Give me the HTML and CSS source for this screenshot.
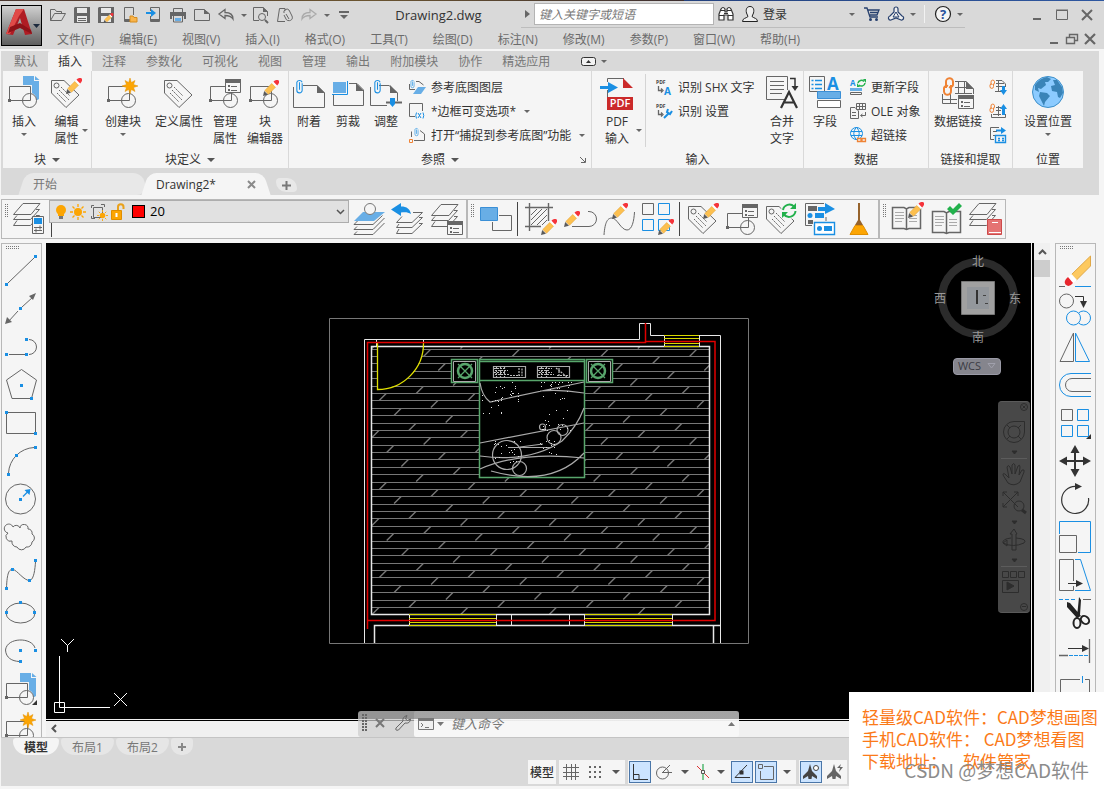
FILE: index.html
```html
<!DOCTYPE html>
<html lang="zh-CN">
<head>
<meta charset="utf-8">
<title>Drawing2.dwg</title>
<link rel="stylesheet" href="styles.css">
</head>
<body>
<svg class="defs" aria-hidden="true">
  <symbol id="pencil" viewBox="0 0 16 16"><path fill="#5a5a5a" d="M0 16L1.2 11L5 14.8z"/><path fill="#fdc04f" stroke="#e0a23a" stroke-width=".6" d="M1.8 10.5L9 3.3L12.7 7L5.5 14.2z"/><path fill="#fff" d="M9 3.3L10.5 1.8L14.2 5.5L12.7 7z"/><path fill="#f5333a" d="M10.5 1.8C12.5-.6 15-.3 15.7.6C16.6 2 16 3.8 14.2 5.5z"/></symbol>
  <symbol id="block" viewBox="0 0 32 32"><path class="g" d="M1.5 10.5H22.5V24.5H1.5z"/><circle class="g" cx="21.5" cy="24.5" r="7"/><path class="gf" d="M0 23h3v3h-3z"/></symbol>
  <symbol id="page" viewBox="0 0 32 32"><path fill="#68aee6" d="M15 0H26V5H31V23L28.500 24.500A8 8 0 0 0 24 17V9H15z"/><path fill="#68aee6" d="M27 0L31.500 4H27z"/></symbol>
  <symbol id="tag" viewBox="0 0 32 32"><path class="g" d="M1.500 4.500H14L29 19L16 31.500L1.500 17z"/><circle class="g" cx="6.500" cy="9.500" r="2.500"/><path class="g" stroke-dasharray="2 1" d="M11 11L20 20M9 14L19 24M7 17L16 26"/></symbol>
  <symbol id="burst" viewBox="0 0 16 16"><path fill="#fca503" stroke="#e08e00" stroke-width=".5" d="M8 0L9.300 4.500L13 2.500L11.500 6.500L16 8L11.500 9.500L13 13.500L9.300 11.500L8 16L6.700 11.500L3 13.500L4.500 9.500L0 8L4.500 6.500L3 2.500L6.700 4.500z"/></symbol>
  <symbol id="form" viewBox="0 0 16 14"><path fill="#f5f5f5" stroke="#666" d="M.5.5h15v13h-15z"/><path class="gf" d="M0 0h16v4H0zM3 6h2v2H3zM3 10h2v2H3z"/><path class="g" d="M6 7.500h6M6 11.500h6"/></symbol>
  <symbol id="layers" viewBox="0 0 32 32"><path class="g" d="M1.500 13.500L11 2.500H28L19 13.500zM5 14.500L1.500 18.500H18.500L27.500 8.500H24M5 19.500L1.500 24.500H18.500L27.500 14.500H24"/></symbol>
  <symbol id="book" viewBox="0 0 32 32"><path class="g" stroke-width="1.500" d="M1.500 6.500H13L15.500 8L18 6.500H29.500V27.500H18L15.500 28.500L13 27.500H1.500zM15.500 8V28"/><path stroke="#aaa" d="M4 11.500h9M4 14.500h9M4 17.500h9M4 20.500h7M18 14.500h8M18 17.500h8M18 20.500h8"/></symbol>
  <symbol id="clip" viewBox="0 0 8 16"><path class="b" d="M6.500 5V11.500A2.500 2.500 0 0 1 1.500 11.500V4A2.700 2.700 0 0 1 6.500 4M4 4V11"/></symbol>
  <symbol id="array" viewBox="0 0 32 32"><path class="g" d="M1.500 1.500h11v11h-11z"/><path class="b" d="M17.500 1.500h11v11h-11zM1.500 17.500h11v11h-11zM17.500 17.500h11v11h-11z"/></symbol>
  <symbol id="sun" viewBox="0 0 16 16"><circle cx="8" cy="8" r="4" fill="#fca503"/><path stroke="#fca503" stroke-width="1.300" d="M8 0v3M8 13v3M0 8h3M13 8h3M2.500 2.500l2 2M11.500 11.500l2 2M13.500 2.500l-2 2M4.500 11.500l-2 2"/></symbol>
  <symbol id="chain" viewBox="0 0 14 20"><g fill="none" stroke="#ef8335" stroke-width="2"><path d="M4 11V5A3.500 3.500 0 0 1 11 4.500V8A3 3 0 0 1 7 10"/><path d="M9 8V14A3.500 3.500 0 0 1 2 14.500V11A3 3 0 0 1 6 9"/></g></symbol>
</svg>

<div class="strip"></div>
<header class="head">
  <button class="app" aria-label="应用程序菜单"><svg width="39" height="39" viewBox="0 0 39 39"><path fill="#b01c24" d="M4 28L14 3H22L30 28L23 29L18 12L11 29z"/><path fill="#e04a48" d="M14 3H22L17 10L8 28H4z"/><path fill="#8e1218" d="M8 21L18 17L29 24L30 28L18 22L6 27z"/><path fill="#1d2a3d" d="M31 18h7l-3.500 4z"/></svg></button>
  <div class="titlebar">
    <div class="qat">
      <button aria-label="打开"><svg width="18" height="16"><path class="g" d="M1.500 13.500V2.500H6L7.500 4.500H12.500V6.500M1.500 13.500L5.500 6.500H16.500L12.500 13.500z"/></svg></button>
      <button aria-label="保存"><svg width="16" height="16"><path class="gf" d="M0 1L1 0H16V16H0z"/><path fill="#e8e8e8" d="M3 1h10v5H3zM3 9h10v6H3z"/><path class="g" d="M4 11.500h8M4 13.500h8"/></svg></button>
      <button aria-label="另存为"><svg width="16" height="16"><path class="gf" d="M0 1L1 0H16V16H0z"/><path fill="#e8e8e8" d="M3 1h10v5H3zM3 9h10v6H3z"/><use href="#pencil" x="5" y="6" width="11" height="10"/></svg></button>
      <button aria-label="从移动设备打开"><svg width="16" height="16"><path class="g" d="M9 14.500H2.500V.5H11.500V8"/><path class="gf" d="M3 12h5v2H3z"/><path fill="#f8b44c" stroke="#d68c1c" d="M8 15V9h3l1 1.500h3V15z"/></svg></button>
      <button aria-label="保存到移动设备"><svg width="16" height="16"><path class="g" d="M4.500 4V.5H13.500V14.500H4.500V9"/><path class="gf" d="M5 12h8v2H5z"/><path class="bf" d="M0 5h5V2l5 4-5 4V7H0z"/></svg></button>
      <button aria-label="打印"><svg width="16" height="16"><path class="gf" d="M0 5h16v7h-2V9H2v3H0z"/><path class="g" d="M3.500 5V1.500h9V5M3.500 9v6h9V9"/><path fill="#68aee6" d="M5 11h6v3H5z"/></svg></button>
      <button aria-label="图纸"><svg width="16" height="16"><path class="g" d="M.5 13.500V2.500H10L15.500 7V13.500z"/><path class="gf" d="M10 2L16 7H10z"/></svg></button>
      <button aria-label="放弃"><svg width="16" height="16"><path class="g" stroke-width="1.300" d="M1 7L7 2.500V5.500C12 5.500 15 7 15 12C13 9 11 8.500 7 8.500V11.500z"/></svg></button>
      <button class="narrow" aria-label="放弃列表"><i class="dd"></i></button>
      <button aria-label="打印预览"><svg width="16" height="16"><path class="g" d="M6 13.500H.5V.5H10L14.500 4.500V9"/><path class="gf" d="M10 0l5 5h-5z"/><circle class="g" cx="9" cy="10" r="3.500"/><path class="g" stroke-width="2" d="M12 13l3 3"/></svg></button>
      <button aria-label="附加"><svg width="16" height="16"><path class="g" d="M.5 14.500L2.500 1.500H8V4M.5 14.500H8"/><path class="g" d="M7 6A3 3 0 0 1 12 3L15 9C17 14 10 15 9 12L7 8M9 7l3 5"/></svg></button>
      <button aria-label="重做"><svg width="16" height="16"><path fill="none" stroke="#aaa" stroke-width="1.300" d="M15 7L9 2.500V5.500C4 5.500 1 7 1 12C3 9 5 8.500 9 8.500V11.500z"/></svg></button>
      <button class="narrow" aria-label="重做列表"><i class="dd"></i></button>
      <button aria-label="自定义快速访问工具栏"><svg width="10" height="8"><path class="gf" d="M0 0h10v2H0zM1 4h8L5 8z"/></svg></button>
    </div>
    <h1 class="doc">Drawing2.dwg</h1>
    <div class="info">
      <button class="play" aria-label="展开"><svg width="5" height="8"><path class="gf" d="M0 0l5 4-5 4z"/></svg></button>
      <input class="search" type="text" placeholder="键入关键字或短语" aria-label="搜索">
      <button class="sq" aria-label="查找"><svg width="16" height="16"><path fill="#fff" stroke="#333" stroke-width="1.200" d="M1 14V8L3 3Q5 0 7 3V6H9V3Q11 0 13 3L15 8V14H10V9H6V14z"/><path stroke="#333" d="M1 9.500h5M10 9.500h5M3 4.500h4M9 4.500h4M6 7.500h4"/></svg></button>
      <button class="login"><svg width="16" height="16"><path fill="#eee" stroke="#222" d="M8 .5C11 .5 12.500 3 11.500 7L10 10.500C12 12.500 15.500 12 15.500 15.500H.5C.5 12 4 12.500 6 10.500L4.500 7C3.500 3 5 .5 8 .5z"/></svg><span>登录</span><i class="dd"></i></button>
      <button class="sq" aria-label="应用商店"><svg width="16" height="16"><path fill="none" stroke="#27406e" stroke-width="1.300" d="M0 2H3L6 11H14M4 4H15L13 9H5M6 6.500h8"/><circle cx="6.500" cy="13.500" r="1.500" fill="#27406e"/><circle cx="12.500" cy="13.500" r="1.500" fill="#27406e"/></svg></button>
      <button class="sq" aria-label="Autodesk"><svg width="16" height="16"><path fill="#eee" stroke="#27406e" stroke-width="1.200" d="M6 3A2 2 0 0 1 10 3V6L14 10A2 2 0 0 1 13 14L8 12L3 14A2 2 0 0 1 2 10L6 6z"/><path fill="none" stroke="#27406e" d="M8 6L11 11H5z"/></svg></button>
      <button class="narrow" aria-label="更多"><i class="dd"></i></button>
      <span class="vline"></span>
      <button class="sq" aria-label="帮助"><svg width="18" height="18"><circle cx="9" cy="9" r="7.500" fill="#f4f4f4" stroke="#222" stroke-width="1.200"/><text x="9" y="13.500" class="qmark">?</text></svg></button>
      <button class="narrow" aria-label="帮助列表"><i class="dd"></i></button>
    </div>
    <div class="win">
      <button aria-label="最小化"><svg width="12" height="12"><path class="gf" d="M2 9h8v2H2z"/></svg></button>
      <button aria-label="最大化"><svg width="12" height="12"><path class="g" d="M.5 1.500h11v9H.5zM0 1h12"/></svg></button>
      <button aria-label="关闭"><svg width="12" height="12"><path class="g" stroke-width="2" d="M1 1l10 10M11 1L1 11"/></svg></button>
    </div>
  </div>
  <div class="menurow">
    <nav class="menu">
      <a href="#">文件(F)</a><a href="#">编辑(E)</a><a href="#">视图(V)</a><a href="#">插入(I)</a><a href="#">格式(O)</a><a href="#">工具(T)</a><a href="#">绘图(D)</a><a href="#">标注(N)</a><a href="#">修改(M)</a><a href="#">参数(P)</a><a href="#">窗口(W)</a><a href="#">帮助(H)</a>
    </nav>
    <div class="win mdi">
      <button aria-label="最小化图形"><svg width="12" height="12"><path class="gf" d="M2 9h8v2H2z"/></svg></button>
      <button aria-label="还原图形"><svg width="12" height="12"><path class="g" stroke-width="1.400" d="M3.500 4V1.500h8v6H9M.5 4.500H8.500V10.500H.5z"/></svg></button>
      <button aria-label="关闭图形"><svg width="12" height="12"><path class="g" stroke-width="2.200" d="M1 1l10 10M11 1L1 11"/></svg></button>
    </div>
  </div>
</header>

<section class="ribbon">
  <nav class="tabs">
    <a href="#">默认</a><a href="#" class="on">插入</a><a href="#">注释</a><a href="#">参数化</a><a href="#">可视化</a><a href="#">视图</a><a href="#">管理</a><a href="#">输出</a><a href="#">附加模块</a><a href="#">协作</a><a href="#">精选应用</a>
    <button class="fold" aria-label="最小化功能区"><svg width="15" height="9"><rect x=".5" y=".5" width="14" height="8" rx="2" fill="#f2f2f2" stroke="#333"/><path fill="#333" d="M5 6h5L7.500 3z"/></svg><i class="dd"></i></button>
  </nav>
  <div class="panels">
    <div class="panel p1">
      <div class="tools">
        <button class="big w42"><svg width="32" height="32"><use href="#page"/><use href="#block"/></svg><span>插入</span><i class="dd"></i></button>
        <button class="big w43"><svg width="34" height="32"><use href="#tag" width="32" height="32"/><use href="#pencil" x="16" y="2" width="16" height="16"/></svg><span>编辑<br>属性</span><i class="dd beside"></i></button>
      </div>
      <div class="cap">块<i class="tri"></i></div>
    </div>
    <div class="panel p2">
      <div class="tools">
        <button class="big w62"><svg width="32" height="32"><use href="#block"/><use href="#burst" x="15" y="2" width="16" height="16"/></svg><span>创建块</span><i class="dd"></i></button>
        <button class="big w50"><svg width="32" height="32"><use href="#tag"/></svg><span>定义属性</span></button>
        <button class="big w42"><svg width="32" height="32"><use href="#block"/><use href="#form" x="16" y="3" width="16" height="14"/></svg><span>管理<br>属性</span></button>
        <button class="big w38"><svg width="32" height="32"><use href="#block"/><use href="#pencil" x="14" y="4" width="16" height="16"/></svg><span>块<br>编辑器</span></button>
      </div>
      <div class="cap">块定义<i class="tri"></i></div>
    </div>
    <div class="panel p3">
      <div class="tools">
        <button class="big w40"><svg width="32" height="32"><path class="g" d="M.5 11V31.500H31.500V17L24 9.500H10"/><path class="gf" d="M24 9L32 17H24z"/><use href="#clip" x="2" y="2" width="9" height="17"/></svg><span>附着</span></button>
        <button class="big w38"><svg width="32" height="32"><path class="g" d="M1.500 18V29.500H31.500V14L25 7.500H17"/><path class="gf" d="M24 7L32 15H24z"/><path fill="#68aee6" d="M1 6h13v11H1z"/><path class="b" d="M15.500 5V18.500H0"/></svg><span>剪裁</span></button>
        <button class="big w38"><svg width="34" height="32"><path class="g" d="M1.500 11V29.500H18M10 9.500H20L28.500 17V25"/><path class="gf" d="M21 9L29 17H21z"/><path class="g" stroke-width="2" d="M17 26.500H33"/><path class="bf" d="M21 22h5v6l-2.500 3L21 28z"/><use href="#clip" x="4" y="2" width="9" height="17"/></svg><span>调整</span></button>
        <div class="smalls">
          <button><svg width="17" height="16"><path class="g" d="M.5 5V10.500H6M7 2.500H10L14.500 6"/><path fill="#68aee6" d="M9 8H17L12 15H4z"/><use href="#clip" x="1" y="0" width="5" height="10"/></svg>参考底图图层</button>
          <button><svg width="17" height="16"><path class="g" d="M6 13.500H.5V.5H13.500V8"/><path class="b" d="M9 10l3 5M12 10l-3 5M7.500 9.500q-1.500 3 0 6M14 9.500q1.500 3 0 6"/></svg>*边框可变选项*<i class="dd"></i></button>
          <button><svg width="17" height="16"><path class="g" d="M2.500 10V4.500M5 13.500H15.500V7L11 3.500"/><path fill="none" stroke="#ef8335" d="M.5 12.500h3v3h-3z"/><use href="#clip" x="5" y="0" width="5" height="10"/></svg>打开“捕捉到参考底图”功能<i class="dd"></i></button>
        </div>
      </div>
      <div class="cap">参照<i class="tri"></i></div>
      <button class="launch" aria-label="参照设置"><svg width="6" height="6"><path class="g" d="M0 0l5 5M5.500 1V5.500H1"/></svg></button>
    </div>
    <div class="panel p4">
      <div class="tools">
        <button class="big w50"><svg width="34" height="34"><path class="g" d="M7.500 6V2.500H24M7.500 14V22"/><path fill="#cb2a2a" d="M23 2L33 12H23zM7 21H33V34H7z"/><text class="pdf" x="20" y="31">PDF</text><path class="bf" d="M0 10H8V6L18 11.500L8 17V13H0z"/></svg><span>PDF<br>输入</span><i class="dd beside"></i></button>
        <span class="psep"></span>
        <div class="smalls wide2">
          <button><svg width="17" height="16"><text class="tiny" x="0" y="5">PDF</text><path class="g" stroke-width="1.300" d="M2.500 7V11.500H6M5 9.500l2 2-2 2"/><text class="bluea" x="8" y="16">A</text></svg>识别 SHX 文字</button>
          <button><svg width="17" height="16"><text class="tiny" x="0" y="5">PDF</text><path class="g" stroke-width="1.300" d="M2.500 7V11.500H6M5 9.500l2 2-2 2"/><path class="b" stroke-width="2" d="M8 15l5-5M16 8l-2 3-3-2 1-3"/></svg>识别 设置</button>
        </div>
        <button class="big w40"><svg width="32" height="32"><path class="g" d="M20 23.500H.5V.5H21.500V14M4 5.500h14M4 9.500h14M4 13.500h14M4 17.500h12"/><path fill="none" stroke="#333" stroke-width="1.500" d="M24 2.500h5V12"/><path fill="#333" d="M25.500 10h7L29 15z"/><path fill="none" stroke="#333" stroke-width="2.200" d="M15 32L23 16L31 32M18 26.500H28"/></svg><span>合并<br>文字</span></button>
      </div>
      <div class="cap">输入</div>
    </div>
    <div class="panel p5">
      <div class="tools">
        <button class="big w42"><svg width="32" height="32"><path class="g" d="M.5.5h15v15H.5z"/><path class="b" stroke-width="1.500" d="M6 4.500h7M6 8.500h7M6 12.500h7M2.500 4.500h2M2.500 8.500h2M2.500 12.500h2"/><text class="biga" x="18" y="14">A</text><path fill="#68aee6" stroke="#3a8fd6" d="M8.500 15.500h23v7h-23z"/><path fill="#fff" stroke="#666" d="M8.500 24.500h23v7h-23z"/></svg><span>字段</span></button>
        <div class="smalls">
          <button><svg width="16" height="16"><text class="bluea sm" x="0" y="7">A</text><path fill="none" stroke="#22b14c" stroke-width="1.500" d="M8 4A3.500 3.500 0 0 1 14 2.500M15 4A3.500 3.500 0 0 1 9 6"/><path fill="#22b14c" d="M13 0h3v4zM7 8h3L7 4z"/><path fill="#68aee6" d="M0 9h12v3H0z"/><path class="g" d="M.5 13.500h11v2H.5z"/></svg>更新字段</button>
          <button><svg width="16" height="16"><path class="g" d="M6.500.5h9v6h-9zM6 3.500h9M9.500 1v6M12.500 1v6M.5 4.500H5L8.500 8V15.500H.5zM2 9.500h4M2 12.500h4M15.500 9v3.500H11M12.500 11l-2 1.500 2 1.500"/></svg>OLE 对象</button>
          <button><svg width="16" height="16"><circle class="b" cx="6.500" cy="6.500" r="6"/><path class="b" d="M6.500 0Q1 6.500 6.500 13M6.500 0Q12 6.500 6.500 13M1 4.500h11M1 8.500h11"/><path fill="#f5f5f5" stroke="#ef8335" stroke-width="1.300" d="M7.500 11.500h3.500v3H7.500zM12 11.500h3.500v3H12z"/></svg>超链接</button>
        </div>
      </div>
      <div class="cap">数据</div>
    </div>
    <div class="panel p6">
      <div class="tools">
        <button class="big w58"><svg width="34" height="34"><path class="g" d="M14 5.500H25L32.500 13V18M1.500 18V27.500H16M1 23.500H16M9.500 18V27M14 11.500h15M14 17.500h17M17.500 6v12M23.500 6v12"/><path class="gf" d="M25 5l8 8h-8z"/><use href="#chain" x="1" y="1" width="14" height="20"/><use href="#form" x="17" y="19" width="16" height="14"/></svg><span>数据链接</span></button>
        <div class="smalls only">
          <button aria-label="从源下载"><svg width="17" height="16"><path class="g" d="M6 1.500H12L15.500 5V8M5 12.500H12M6 4.500h8M6 7.500h8M8.500 2v10"/><use href="#chain" x="-1" y="0" width="7" height="11"/><path class="bf" d="M12 7h3v4h2l-3.500 5L10 11h2z"/></svg></button>
          <button aria-label="上载到源"><svg width="17" height="16"><path class="g" d="M1.500 11V14.500H15.500V11M6 4.500h5M6 7.500h5M3 11.500h8M8.500 3v10"/><use href="#chain" x="-1" y="0" width="7" height="11"/><path class="bf" d="M12 12h3V6h2L13.500 1L10 6h2z"/></svg></button>
          <button aria-label="提取数据"><svg width="17" height="16"><path class="g" d="M4 12.500H.5V.5H9M3 4.500h4M3 8.500h2"/><path class="bf" d="M6 2.500H11V0L16 3.500L11 7V4.500H6z"/><path class="b" stroke-width="1.400" d="M5.500 8.500h10v7h-10zM8 11.500h2M12 11.500h2M8 13.500h2M12 13.500h2"/></svg></button>
        </div>
      </div>
      <div class="cap">链接和提取</div>
    </div>
    <div class="panel p7">
      <div class="tools">
        <button class="big w70"><svg width="32" height="32"><circle cx="16" cy="16" r="15.500" fill="#8ccbff" stroke="#3d8fc9"/><path fill="#3a84b8" d="M3 9Q8 2 15 1L19 3L16 6L13 6L14 9L9 13L6 12L7 16L3 14zM8 16L15 17L18 20L13 26L12 30L9 24L7 20zM21 4L25 4L30 11L31 17L28 22L26 21L25 16L20 15L19 10L23 9z"/></svg><span>设置位置</span><i class="dd"></i></button>
      </div>
      <div class="cap">位置</div>
    </div>
  </div>
</section>

<nav class="files">
  <a href="#" class="file start"><span>开始</span></a>
  <a href="#" class="file cur"><span>Drawing2*</span><svg width="9" height="9"><path stroke="#8a8a8a" stroke-width="2" d="M1 1l7 7M8 1L1 8"/></svg></a>
  <button class="plus" aria-label="新图形"><svg width="9" height="9"><path stroke="#777" stroke-width="2" d="M4.500 0v9M0 4.500h9"/></svg></button>
</nav>

<div class="bars">
  <div class="bar">
    <i class="grip"></i>
    <button class="tb" aria-label="图层特性"><svg width="36" height="36"><use href="#layers" width="32" height="32"/><path fill="#f5f5f5" stroke="#666" d="M20.500 15.500h11v17h-11z"/><path class="bf" d="M22 17h8v6h-8z"/><path class="g" d="M22 26.500h8M22 29.500h8M28 24.500v4M24 27.500v4"/></svg></button>
    <div class="combo">
      <div class="pick">
        <svg width="78" height="20" viewBox="0 0 78 20"><circle cx="8" cy="8" r="5" fill="#fca503"/><path fill="#fca503" d="M5 11h6v3H5z"/><path fill="#777" d="M6 14h4v3H6z"/><use href="#sun" x="17" y="2" width="16" height="16"/><path class="g" d="M40.500 5.500H49.500V15.500H40.500zM38.500 6V3.500H41M48 2.500h3.500V5M38.500 14v2.500H42"/><use href="#sun" x="44" y="8" width="11" height="11"/><path fill="#fca503" stroke="#e08e00" d="M58.500 8.500h10v9h-10z"/><path fill="none" stroke="#e9a11b" stroke-width="2" d="M65 8V5A2.500 2.500 0 0 1 70.500 5V7"/><path fill="#fff" d="M62.500 11h2v4h-2z"/></svg>
        <i class="swatch"></i>
        <select aria-label="图层"><option>20</option></select>
        <svg class="chev" width="9" height="6"><path fill="none" stroke="#555" stroke-width="1.500" d="M1 1l3.500 3.500L8 1"/></svg>
      </div>
    </div>
    <button class="tb" aria-label="置为当前图层"><svg width="32" height="34"><path class="g" d="M4.500 19L1 22.500H20L29.500 13.500M4 24.500L1 27.500H20L31.500 16M4 29.500L1 32.500H20L31.500 21" /><path fill="#68aee6" d="M10 10H32L21 19H1z"/><circle cx="17" cy="7" r="5.500" fill="#f5f5f5" stroke="#777"/></svg></button>
    <button class="tb" aria-label="上一个图层"><svg width="34" height="34"><path class="g" d="M22 10.500H31.500L21 20.500H5.500L11 14.500M8 22L5.500 25.500H21L31.500 15.500H28M8 27L5.500 31.500H21L31.500 21.500H28"/><path class="bf" d="M0 7.500L10 1V4.500C16 4.500 19 7 20 12C17 10 14 10 10 10.500V14z"/></svg></button>
    <button class="tb" aria-label="图层状态"><svg width="34" height="34"><use href="#layers" width="32" height="32"/><use href="#form" x="17" y="19" width="16" height="14"/></svg></button>
  </div>
  <div class="bar">
    <i class="grip"></i>
    <button class="tb" aria-label="绘图次序"><svg width="32" height="32"><path class="g" d="M19 12.500H31.500V27.500H12.500V19"/><path fill="#68aee6" stroke="#3a8fd6" d="M.5 4.500h17v13H.5z"/></svg></button>
    <i class="bsep"></i>
    <button class="tb" aria-label="编辑图案填充"><svg width="32" height="32"><path class="g" stroke-width="1.400" d="M4.500 0V28M23.500 0V18M0 4.500H28M0 23.500H16"/><path class="g" d="M6 12L12 6M6 17L17 6M6 22L22 6M12 22L22 12M17 22L22 17"/><use href="#pencil" x="16" y="16" width="16" height="16"/></svg></button>
    <button class="tb" aria-label="编辑多段线"><svg width="32" height="32"><path class="g" d="M8 23.500H25A7.500 7.500 0 0 0 25 8.500H24"/><use href="#pencil" x="0" y="8" width="16" height="16"/></svg></button>
    <button class="tb" aria-label="编辑样条曲线"><svg width="32" height="32"><path class="g" d="M1 32C2 18 5 15 9 15C14 15 18 27 24 27C29 27 31 18 31.500 9"/><use href="#pencil" x="9" y="0" width="16" height="16"/></svg></button>
    <button class="tb" aria-label="编辑阵列"><svg width="32" height="32"><use href="#array" x="-1" y="-1"/><use href="#pencil" x="16" y="16" width="16" height="16"/></svg></button>
    <i class="bsep"></i>
    <button class="tb" aria-label="编辑属性"><svg width="32" height="32"><use href="#tag" y="-1"/><use href="#pencil" x="16" y="0" width="16" height="16"/></svg></button>
    <button class="tb" aria-label="块属性管理器"><svg width="32" height="32"><use href="#block"/><use href="#form" x="16" y="1" width="16" height="14"/></svg></button>
    <button class="tb" aria-label="同步属性"><svg width="32" height="32"><use href="#tag" y="-1"/><circle cx="24" cy="8" r="8" fill="#f5f5f5"/><path fill="none" stroke="#22b14c" stroke-width="2" d="M18 7A6.500 6.500 0 0 1 29 3.500M30.500 8A6.500 6.500 0 0 1 19 11.500"/><path fill="#22b14c" d="M31 0v6h-6zM17 15V9h6z"/></svg></button>
    <button class="tb" aria-label="数据提取"><svg width="32" height="32"><path class="g" d="M8 22.500H1.500V.5H20M22 14V18"/><path class="gf" d="M4 3h9v5H4zM4 17h5v4H4z"/><path class="bf" d="M14 4H21V0L31 6L21 11V8H14zM11 10h9v5H11z"/><circle class="bf" cx="6" cy="12.500" r="2.500"/><path fill="#fff" stroke="#1a8fe3" stroke-width="1.400" d="M10.500 19.500h20v12h-20z"/><circle class="bf" cx="15.500" cy="25.500" r="2.500"/><path class="bf" d="M20 23h8v5h-8z"/></svg></button>
    <button class="tb" aria-label="清理"><svg width="32" height="32"><path fill="#96632c" d="M15 0h2v17l3 5h-8l3-5z"/><path fill="#fca503" stroke="#e08e00" d="M12 22.500H20L25 31.500H7z"/></svg></button>
  </div>
  <div class="bar">
    <i class="grip"></i>
    <button class="tb" aria-label="标准"><svg width="34" height="34"><use href="#book" y="-1" width="32" height="32"/><use href="#pencil" x="17" y="0" width="16" height="16"/></svg></button>
    <button class="tb" aria-label="检查标准"><svg width="32" height="34"><use href="#book" y="3" width="32" height="32"/><path fill="#22b14c" d="M16 7L19 4L22 7L28 1L31 4L22 13z"/></svg></button>
    <button class="tb" aria-label="图层转换器"><svg width="32" height="32"><use href="#layers" x="-2" y="-2" width="32" height="32"/><path fill="#e57373" stroke="#cc4a4a" d="M17.500 16.500h14v15h-14z"/><path stroke="#fff" d="M22 19.500h6M19 29.500h12"/></svg></button>
  </div>
</div>

<main class="work">
  <div class="side left">
    <i class="hgrip"></i>
    <button aria-label="直线"><svg width="32" height="32"><path class="g" d="M3 28L29 3"/><path class="bf" d="M0 28h3v3H0zM29 0h3v3h-3z"/></svg></button>
    <button aria-label="构造线"><svg width="32" height="32"><path class="g" d="M3 29L13 18M17 14L28 4"/><path class="gf" d="M31 0L28 7L24 3zM0 31L2 24L7 29z"/><path class="bf" d="M14 14h3v3h-3z"/></svg></button>
    <button aria-label="多段线"><svg width="32" height="32"><path class="g" d="M4 23.500H20M24 23.500A7.500 7.500 0 0 0 24 8.500"/><path class="bf" d="M0 22h3v3H0zM20 22h3v3h-3zM20 7h3v3h-3z"/></svg></button>
    <button aria-label="多边形"><svg width="32" height="32"><path class="g" d="M16.500 .5L31.500 11L26.500 29.500H7L1.500 11z"/><path class="bf" d="M15 15h3v3h-3zM25 28h3v3h-3z"/></svg></button>
    <button aria-label="矩形"><svg width="32" height="32"><path class="g" d="M1.500 5.500H30.500V26.500H1.500z"/><path class="bf" d="M0 4h3v3H0zM29 25h3v3h-3z"/></svg></button>
    <button aria-label="圆弧"><svg width="32" height="32"><path class="g" d="M3.500 28A27 27 0 0 1 29 2.500"/><path class="bf" d="M2 28h3v3H2zM10 9h3v3h-3zM29 1h3v3h-3z"/></svg></button>
    <button aria-label="圆"><svg width="32" height="32"><circle class="g" cx="15.500" cy="16" r="15"/><path class="b" stroke-width="1.300" d="M18 13.500L23 8.500"/><path class="bf" d="M14 15h3v3h-3zM25.500 6L24.500 12L19.500 7z"/></svg></button>
    <button aria-label="修订云线"><svg width="32" height="32"><path class="g" d="M3 12A4.500 4.500 0 1 1 8 6A4 4 0 0 1 15 7A4 4 0 0 1 23 8A4 4 0 0 1 27 13A4.500 4.500 0 0 1 27 21A5 5 0 0 1 21 26A5 5 0 0 1 12 26A5 5 0 0 1 7 20A4.500 4.500 0 0 1 3 12"/></svg></button>
    <button aria-label="样条曲线"><svg width="32" height="32"><path class="g" d="M1.500 29C2 14 4 10 8 10.500S19 22 25 21.500C29 20 30 10 30.500 3"/><path class="bf" d="M0 28h3v3H0zM6 9h3v3H6zM23 20h3v3h-3zM29 0h3v3h-3z"/></svg></button>
    <button aria-label="椭圆"><svg width="32" height="32"><ellipse class="g" cx="15.500" cy="16" rx="14.500" ry="10"/><path class="bf" d="M14 4h3v3h-3zM0 14h3v3H0zM28 14h3v3h-3z"/></svg></button>
    <button aria-label="椭圆弧"><svg width="32" height="32"><path class="g" d="M30 13C27 2 2 2 .5 15C1 23 7 26 14 26.500"/><path class="bf" d="M14 14h3v3h-3zM29 14h3v3h-3zM14 25h3v3h-3z"/></svg></button>
    <button aria-label="插入块"><svg width="32" height="32"><use href="#page"/><use href="#block"/><path fill="#333" d="M32 27v5h-5z"/></svg></button>
    <button aria-label="创建块"><svg width="32" height="32"><use href="#block"/><use href="#burst" x="15" y="1" width="16" height="16"/></svg></button>
  </div>

  <div class="view">
    <div class="cols">
      <div class="frame">
        <div class="canvas">
          <svg class="drawing" role="img" aria-label="平面图">
            <defs><clipPath id="room"><path clip-rule="evenodd" d="M372 347H709V614H372zM451 359V383H479V478H585V383H613V359zM378 347V389A45 45 0 0 0 423 347z"/></clipPath></defs>
            <g transform="translate(-46 -243)" fill="none">
              <path stroke="#777" d="M329.500 318.500H748.500V643.500H329.500z"/>
              <g id="floor" stroke="#777" clip-path="url(#room)"></g>
              <g stroke="#e8e8e8">
                <path d="M364.500 643V339.500H639.500V323.500H650.500V335.500H720.500V643"/>
                <path stroke-width="1.500" d="M371.500 346.500H709.500V614.500H371.500zM374.500 643V625.500H720.500M713.500 626V643"/>
                <path d="M376.500 339V346M423.500 339V346M664.500 335V346M699.500 335V346M409.500 614V625M496.500 614V625M511.500 614V625M569.500 614V625M584.500 614V625M672.500 614V625"/>
              </g>
              <path stroke="#d8d800" d="M664 335.500H699M664 338.500H699M664 343.500H699M664 346.500H699M409 614.500H496M409 618.500H496M409 622.500H496M409 625.500H496M585 614.500H672M585 618.500H672M585 622.500H672M585 625.500H672"/>
              <path stroke="#e0e000" stroke-width="1.300" d="M377.500 343V389.500A46 46 0 0 0 423.500 343"/>
              <path stroke="#e00000" stroke-width="1.500" d="M367.500 629V342.500H645.500V323M645.500 341.500H715V620.500H367.500"/>
              <g stroke="#58a66c" stroke-width="1.500">
                <path d="M479.500 359.500H584.500V477.500H479.500zM479.500 380.500H584.500M479.500 361.500H584.500M451.500 359.500H477.500V382.500H451.500zM586.500 359.500H612.500V382.500H586.500z"/>
                <path stroke="#aaa" stroke-width="1" d="M453.500 361.500H475.500V381.500H453.500zM588.500 361.500H610.500V381.500H588.500z"/>
                <g stroke-width="2.500"><circle cx="465" cy="371" r="7"/><circle cx="598" cy="371" r="7"/></g>
                <path stroke-width="1.300" d="M458 364L472 378M472 364L458 378M591 364L605 378M605 364L591 378"/>
              </g>
              <g stroke="#aaa" stroke-width="1.200">
                <path d="M493.500 366.500H525.500V377.500H493.500zM537.500 366.500H569.500V377.500H537.500z"/>
                <path stroke="#bbb" stroke-dasharray="2 1" d="M494 368.500H505M495 370.500H508M494 372.500H506M495 374.500H509M510 375.500H520M496.500 367V377M500.500 367V377M504.500 367V377M519 368V376M522 368.500V376M539 368.500H552M538 370.500H550M539 372.500H552M538 374.500H554M557 375.500H569M541.500 367V377M546.500 367V377M556 368L567 377M559 368V377"/>
                <path d="M480 383Q482 396 490 402L584 382M540 391Q560 389 584 393M480 443L584 423M480 456Q530 463 562 441Q577 427 584 408M480 469Q520 451 584 458M491 471Q552 488 584 453M508 447.500H550M520 447L543 444"/>
                <circle cx="507" cy="455" r="14.500"/><circle cx="519.500" cy="468.500" r="7"/><circle cx="554" cy="437.500" r="7"/><circle cx="562.500" cy="430" r="5.500"/><circle cx="542.500" cy="427" r="3"/>
              </g>
              <g id="dots" fill="#ddd"></g>
              <path stroke="#fff" d="M59.500 656V707.500H110M54.500 702.500h10v10h-10zM61 639L67.500 645.500L74 639M67.500 645V652M114 693L127 706M127 693L114 706"/>
            </g>
          </svg>
          <svg class="compass" width="96" height="100"><circle cx="48" cy="50" r="36" fill="none" stroke="#2b2b2b" stroke-width="8"/><path fill="#a0a0a0" stroke="#777" d="M31.500 33.500h33v33h-33z"/><path fill="#93979c" d="M37 39h22v22H37z"/><path stroke="#333" stroke-width="2" d="M47 42v14"/><path stroke="#444" d="M53 47.500h3M55 55.500h3"/><text x="48" y="18">北</text><text x="48" y="94">南</text><text x="10" y="55">西</text><text x="85" y="55">东</text></svg>
          <button class="wcs">WCS<svg width="9" height="6"><path fill="none" stroke="#a0a0ac" d="M1 .5h7L4.500 5z"/></svg></button>
          <div class="nav">
            <svg width="32" height="210" fill="none" stroke="#2d2d2d"><circle cx="26" cy="5" r="3.500"/><path d="M24.500 3.500l3 3M27.500 3.500l-3 3"/><circle cx="16" cy="30" r="6"/><path d="M16 19.500H26.500V30A10.500 10.500 0 1 1 16 19.500zM12 26l-3-3M20 26l3-3M12 34l-3 3M20 34l3 3"/><path fill="#2d2d2d" d="M14 49h5l-2.500 3zM14 119h5l-2.500 3zM14 157h5l-2.500 3z"/><path stroke="#5c5c5c" d="M3 56.500H29M3 164.500H29"/><path d="M10 81L5 73Q5 70 8 73L11 76L9 65Q10 62 12 65L14 72V63Q16 60 17 63V72L20 64Q22 62 22 65L21 73L24 68Q27 67 26 70L22 80Q16 85 10 81z"/><path d="M5 90L20 105M20 90L5 105M5 94V90H9M16 90h4v4M5 101v4h4"/><circle cx="21" cy="104" r="5"/><path stroke-width="3" d="M24 108l4 3"/><path d="M14 148V132H12L16 127L19 132H18V148zM13 136Q4 137 5 141Q15 146 26 141Q30 137 18 136M5 141l4-3v6z"/><path d="M4.500 169.500h6v6h-6zM12.500 169.500h6v6h-6zM20.500 169.500h6v6h-6zM4.500 178.500h16v12h-16z"/><path fill="#2d2d2d" d="M9 180l7 4-7 4z"/><circle cx="26" cy="205" r="3.500"/><path d="M24 204.500h4"/></svg>
          </div>
        </div>
      </div>
      <div class="vscroll"><svg width="9" height="6"><path fill="none" stroke="#555" stroke-width="2" d="M1 5l3.500-3.500L8 5"/></svg><i></i></div>
    </div>
    <div class="hscroll"><svg width="6" height="9"><path fill="none" stroke="#555" stroke-width="2" d="M5 1L1.500 4.500L5 8"/></svg></div>
    <div class="cmd">
      <div class="cmdleft">
        <i class="cgrip"></i>
        <button aria-label="关闭命令行"><svg width="10" height="10"><path stroke="#777" stroke-width="2" d="M1 1l8 8M9 1L1 9"/></svg></button>
        <button aria-label="自定义"><svg width="16" height="16"><path class="g" d="M1 13L8 6Q7 2 12 .5L10.500 4L12.500 5.500L15.500 4Q15 9 10 8L3.500 15Q0 16 1 13z"/></svg></button>
      </div>
      <div class="cmdin">
        <svg width="26" height="14"><path fill="#f0f0f0" stroke="#777" d="M.5 1.500h15v11H.5z"/><path fill="#777" d="M0 1h16v3H0zM19 5h7l-3.500 4z"/><path fill="none" stroke="#777" d="M3 6l2 2-2 2M7 10.500h4"/></svg>
        <input type="text" placeholder="键入命令" aria-label="命令">
        <svg width="7" height="4"><path fill="#777" d="M0 4L3.500 0L7 4z"/></svg>
      </div>
    </div>
  </div>

  <div class="side right">
    <i class="hgrip"></i>
    <button aria-label="删除"><svg width="32" height="32"><path fill="#fdc95f" stroke="#e0a848" d="M12 20L31.500 1V11L17.500 25z"/><path fill="#fff" d="M9 22L12.500 19L18 25L14 28z"/><path fill="#e8262d" d="M9 22L14 28Q10 33 6.500 29.500Q4 26 9 22z"/><path class="g" d="M0 31.500h6"/><path class="b" d="M16 31.500h16"/></svg></button>
    <button aria-label="复制"><svg width="32" height="32"><circle class="g" cx="7.500" cy="8" r="7"/><path fill="none" stroke="#333" d="M16 3.500h8.500V9"/><path fill="#333" d="M21 8h7l-3.500 7z"/><circle class="b" cx="24.500" cy="25" r="7"/><circle cx="14.500" cy="25" r="7" fill="#f5f5f5" stroke="#1a8fe3"/></svg></button>
    <button aria-label="镜像"><svg width="32" height="32"><path class="g" d="M14.500 2V30.500H1z"/><path class="b" d="M16.500 2V30.500H30.500z"/></svg></button>
    <button aria-label="偏移"><svg width="32" height="32"><path class="b" d="M32 4.500H12A11.500 11.500 0 0 0 12 27.500H32"/><path class="g" d="M32 9.500H13A6.500 6.500 0 0 0 13 22.500H32"/></svg></button>
    <button aria-label="阵列"><svg width="32" height="32"><use href="#array" x="1" y="1"/><path fill="#333" d="M32 27v5h-5z"/></svg></button>
    <button aria-label="移动"><svg width="32" height="32"><path stroke="#333" stroke-width="2" d="M16 5V27M5 16H27"/><path fill="#333" d="M16 0l4.500 8h-9zM16 32l4.500-8h-9zM0 16l8-4.500v9zM32 16l-8-4.500v9z"/></svg></button>
    <button aria-label="旋转"><svg width="32" height="32"><path fill="none" stroke="#333" stroke-width="1.200" d="M29.500 15A13.500 13.500 0 1 1 17 3.500"/><path fill="#333" d="M16 0l7 3.500-7 3.500z"/></svg></button>
    <button aria-label="缩放"><svg width="32" height="32"><path class="b" d="M.5 13V.5H31.500V31.500H19"/><path class="g" d="M.5 14.500h17v17H.5z"/></svg></button>
    <button aria-label="拉伸"><svg width="32" height="32"><path class="g" d="M14.500 22V.5H.5V31.500H14.500V27"/><path class="b" d="M16 .5H21.500L31.500 31.500H16"/><path stroke="#333" d="M9 24.500h9"/><path fill="#333" d="M17 21l7 3.500-7 3.500z"/></svg></button>
    <button aria-label="修剪"><svg width="32" height="32"><path class="b" stroke-dasharray="4 2" d="M0 2.500H16"/><path class="g" d="M24 2.500h8"/><path fill="#222" d="M20 0L22 3L21 18L18 20zM8 5L11 6L22 19L18 21L8 10z"/><g fill="none" stroke="#222" stroke-width="2"><ellipse cx="18" cy="26" rx="3.500" ry="5"/><ellipse cx="26" cy="23" rx="3.500" ry="4.500" transform="rotate(-50 26 23)"/></g></svg></button>
    <button aria-label="延伸"><svg width="32" height="32"><path class="g" stroke-width="1.300" d="M30.500 4V28M0 20.500h9"/><path class="b" stroke-dasharray="4 1" d="M10 20.500h19"/><path stroke="#333" d="M9 13.500h15"/><path fill="#333" d="M23 10l7 3.500-7 3.500z"/></svg></button>
    <button aria-label="打断"><svg width="32" height="32"><path class="g" d="M21 6.500H1.500V32M26 6.500H30.500V32"/><path class="b" d="M23.500 3v7"/></svg></button>
  </div>
</main>

<footer class="foot">
  <nav class="layouts">
    <a href="#" class="on">模型</a><a href="#">布局1</a><a href="#">布局2</a><button aria-label="新建布局"><svg width="8" height="8"><path stroke="#888" stroke-width="2" d="M4 0v8M0 4h8"/></svg></button>
  </nav>
  <div class="status">
    <button class="model">模型</button>
    <div class="grp">
      <button aria-label="栅格"><svg width="16" height="16"><path class="g" d="M3.500 0v16M8.500 0v16M12.500 0v16M0 3.500h16M0 8.500h16M0 12.500h16"/></svg></button>
      <button aria-label="捕捉"><svg width="16" height="16"><path class="gf" d="M2 2h2v2H2zM7 2h2v2H7zM12 2h2v2h-2zM2 7h2v2H2zM7 7h2v2H7zM12 7h2v2h-2zM2 12h2v2H2zM7 12h2v2H7zM12 12h2v2h-2z"/></svg></button>
      <button class="nr" aria-label="捕捉设置"><i class="tri"></i></button>
    </div>
    <div class="grp">
      <button class="act" aria-label="正交"><svg width="16" height="16"><path fill="none" stroke="#333" d="M1.500 0V15.500H16M2 10.500h5V15"/></svg></button>
      <button aria-label="极轴"><svg width="16" height="16"><circle class="g" cx="6.500" cy="9" r="6"/><path class="g" d="M6 8.500h10M6 9L14 1"/></svg></button>
      <button class="nr" aria-label="极轴设置"><i class="tri"></i></button>
      <button class="nr" aria-label="等轴测"><svg width="14" height="16"><path stroke="#2aa850" stroke-width="1.200" d="M7 0v16"/><path stroke="#d33" d="M1 2l12 12"/><path fill="#f5f5f5" stroke="#555" d="M5.500 6.500h3v3h-3z"/></svg></button>
      <button class="nr" aria-label="等轴测设置"><i class="tri"></i></button>
      <button class="act" aria-label="对象捕捉追踪"><svg width="18" height="16"><path fill="none" stroke="#333" d="M14 1L2 13.500H17"/><path fill="#333" d="M6.500 6.500h4v4h-4z"/></svg></button>
      <button class="act" aria-label="对象捕捉"><svg width="16" height="16"><path class="g" d="M6 2.500h9.500v13h-13V7"/><path class="g" d="M.5.5h4v4h-4z"/></svg></button>
      <button class="nr" aria-label="对象捕捉设置"><i class="tri"></i></button>
    </div>
    <div class="grp">
      <button class="act" aria-label="注释可见性"><svg width="17" height="16"><path fill="#444" d="M7 0l2 7L14 12V15L9 12L8.500 15H5.500L5 12L0 15V12L5 7z"/><circle cx="13" cy="4" r="2.500" fill="#fff" stroke="#444"/></svg></button>
      <button aria-label="自动缩放"><svg width="17" height="16"><path class="gf" d="M7 0l2 7L14 12V15L9 12L8.500 15H5.500L5 12L0 15V12L5 7zM14 0l-4 4h3l-1 4 4-5h-3z"/></svg></button>
    </div>
  </div>
</footer>

<aside class="promo">
  <p>轻量级CAD软件：CAD梦想画图</p>
  <p>手机CAD软件：&nbsp;CAD梦想看图</p>
  <p>下载地址：<span class="dl">软件管家</span></p>
  <p class="mark">CSDN @梦想CAD软件</p>
</aside>
<script src="drawing.js"></script>
</body>
</html>
```

FILE: styles.css
```css
* { box-sizing: border-box; }
html, body { height: 100%; }
body {
  margin: 0;
  display: flex;
  flex-direction: column;
  overflow: hidden;
  position: relative;
  background: #f5f5f5;
  color: #333;
  font: 12px/17px "Open Sans", "Noto Sans CJK SC", sans-serif;
}
button, input, select { font: inherit; color: inherit; margin: 0; padding: 0; border: 0; background: none; border-radius: 0; }
button { display: flex; align-items: center; justify-content: center; }
a { color: inherit; text-decoration: none; }
svg { display: block; flex: none; overflow: visible; }
i { flex: none; }
.defs { position: absolute; width: 0; height: 0; }
.g { fill: none; stroke: #666; }
.gf { fill: #666; }
.b { fill: none; stroke: #1a8fe3; }
.bf { fill: #1a8fe3; }
.dd { border: 3px solid transparent; border-top-color: #666; border-bottom: 0; }
.tri { border: 4px solid transparent; border-top-color: #555; border-bottom: 0; }

.strip { flex: none; height: 1px; background: linear-gradient(90deg, #4c3730 0, #6b5530 33%, #3e2f30 62%, #24427e 62%, #2e57a0 100%); }
.head { flex: none; display: grid; grid-template-columns: 46px 1fr; grid-template-rows: 28px 20px; background: #d9d9d9; }
.app { grid-row: 1 / 3; width: 41px; height: 41px; margin: 4px 0 0 1px; border: 1px solid #000; background: linear-gradient(#d0d0d0, #5e5e5e); }
.titlebar { display: flex; }
.qat { display: flex; }
.qat button { width: 24px; }
.qat .narrow { width: 11px; }
.doc { flex: 1; margin: 0; font-size: 13px; line-height: 28px; font-weight: 400; text-align: center; }
.info { display: flex; align-items: center; width: 444px; height: 27px; border-bottom: 1px solid #bdbdbd; }
.play { width: 13px; }
.search { width: 180px; height: 22px; border: 1px solid #b4b4b4; background: #fff; padding: 0 4px; font-style: italic; }
.search::placeholder, .cmdin input::placeholder { color: #777; opacity: 1; }
.sq { width: 24px; }
.login { width: 122px; gap: 5px; padding-left: 4px; padding-right: 5px; }
.login .dd { margin-left: auto; }
.info .narrow { width: 10px; }
.vline { width: 1px; height: 18px; background: #f2f2f2; margin: 0 6px; }
.qmark { font: bold 13px "Open Sans", sans-serif; fill: #27509c; text-anchor: middle; }
.win { display: flex; justify-content: flex-end; width: 139px; padding-right: 5px; }
.win button { width: 25px; }
.mdi button { width: 18px; }
.menurow { display: flex; justify-content: space-between; }
.menu { display: flex; gap: 25px; padding-left: 11px; color: #6b6b6b; line-height: 22px; }

.ribbon { flex: none; margin: 2px 5px 0 1px; background: #d9d9d9; }
.tabs { display: flex; height: 20px; padding-left: 3px; color: #777; line-height: 22px; }
.tabs a { padding: 0 10px; }
.tabs .on { background: #f5f5f5; color: #333; border-radius: 2px 2px 0 0; }
.fold { gap: 5px; margin-left: 21px; }
.panels { display: flex; gap: 1px; padding-left: 2px; }
.panel { position: relative; background: #f5f5f5; height: 97px; }
.p1 { width: 88px; } .p2 { width: 196px; } .p3 { width: 302px; } .p4 { width: 211px; } .p5 { width: 124px; } .p6 { width: 83px; } .p7 { width: 70px; }
.tools { display: flex; height: 78px; }
.big { position: relative; flex-direction: column; justify-content: flex-start; padding-top: 5px; white-space: nowrap; height: 78px; }
.big svg { height: 32px; }
.big span { margin-top: 5px; }
.big .dd { margin-top: 3px; }
.big .beside { position: absolute; right: 0; top: 55px; }
.w38 { width: 38px; } .w40 { width: 40px; } .w42 { width: 42px; } .w43 { width: 43px; } .w50 { width: 50px; } .w58 { width: 58px; } .w62 { width: 62px; } .w70 { width: 70px; }
.cap { display: flex; align-items: center; justify-content: center; gap: 6px; height: 19px; padding-top: 2px; }
.smalls { padding: 4px 0 0 4px; }
.smalls button { height: 24px; gap: 5px; white-space: nowrap; justify-content: flex-start; }
.smalls .dd { margin-left: 3px; }
.psep { width: 1px; height: 73px; margin: 3px 10px 0 3px; background: #d4d4d4; }
.wide2 { width: 106px; padding-left: 0; }
.only { padding-left: 3px; }
.launch { position: absolute; right: 5px; bottom: 5px; }
.tiny { font: bold 5px "Open Sans", sans-serif; fill: #444; }
.pdf { font: 600 11px "Open Sans", sans-serif; fill: #fff; text-anchor: middle; }
.bluea { font: bold 10px "Open Sans", sans-serif; fill: #1a8fe3; }
.bluea.sm { font-size: 8px; }
.biga { font: bold 17px "Open Sans", sans-serif; fill: #1a8fe3; }

.files { flex: none; display: flex; height: 27px; margin: 0 5px 0 1px; padding: 5px 0 0 21px; background: #d9d9d9; position: relative; z-index: 0; }
.file { position: relative; display: flex; align-items: center; height: 22px; --tab: #e8e8e8; }
.file::before, .file::after { content: ""; position: absolute; z-index: -1; top: 0; bottom: 0; background: var(--tab); }
.file::before { left: 0; right: 40%; transform: skewX(-18deg); border-radius: 8px 0 0 0; }
.file::after { left: 40%; right: 0; border-radius: 0 12px 8px 0; }
.start { width: 123px; padding-left: 11px; color: #777; }
.cur { width: 126px; padding: 0 15px 0 11px; justify-content: space-between; --tab: #f5f5f5; }
.cur::after { right: 4px; transform: skewX(18deg); border-radius: 0 8px 0 0; }
.plus { width: 21px; height: 14px; margin: 5px 0 0 5px; background: #e8e8e8; border-radius: 4px 10px 4px 10px; }

.bars { flex: none; display: flex; height: 48px; padding: 4px 0 0 1px; }
.bar { display: flex; align-items: center; height: 40px; border: 1px solid #b8b8b8; }
.grip { width: 4px; height: 14px; margin: 0 2px 16px; background: conic-gradient(#777 25%, transparent 0) 0 0 / 2px 2px; }
.tb { width: 39px; height: 38px; }
.bsep { width: 1px; height: 34px; margin: 0 3px 0 2px; background: #444; }
.combo { width: 300px; height: 38px; }
.combo::after { content: ""; display: block; width: 1px; height: 14px; margin-left: 2px; background: #444; }
.pick { position: relative; display: flex; align-items: center; height: 23px; padding-left: 3px; background: #e1e1e1; border: 1px solid #adadad; }
.swatch { width: 13px; height: 13px; margin-left: 1px; background: #f00; border: 1px solid #000; }
.pick select { flex: 1; margin-left: 5px; font-size: 13px; appearance: none; color: #000; }
.chev { position: absolute; right: 3px; top: 8px; pointer-events: none; }

.work { flex: 1; min-height: 0; display: flex; }
.side { width: 41px; border: 1px solid #b8b8b8; border-bottom: 0; overflow: hidden; flex: none; }
.side button { width: 38px; height: 38px; }
.left { margin-left: 1px; }
.right { margin: 0 8px 0 5px; }
.hgrip { display: block; width: 14px; height: 4px; margin: 2px 0 2px 3px; background: conic-gradient(#777 25%, transparent 0) 0 0 / 2px 2px; }
.view { position: relative; flex: 1; min-width: 0; display: flex; flex-direction: column; margin-left: 4px; }
.cols { flex: 1; min-height: 0; display: flex; }
.frame { flex: 1; display: flex; padding: 0 2px 1px 0; background: #000; }
.canvas { position: relative; flex: 1; overflow: hidden; border: solid #eee; border-width: 0 1px 1px 0; background: #000; }
.drawing { position: absolute; inset: 0; width: 100%; height: 100%; }
.compass { position: absolute; right: 5px; top: 5px; }
.compass text { font: 12px "Noto Sans CJK SC", sans-serif; fill: #999; text-anchor: middle; }
.wcs { position: absolute; right: 30px; top: 115px; width: 48px; height: 17px; gap: 6px; padding-bottom: 2px; border-radius: 4px; border: 1px solid #9a9aa6; background: #85858d; color: #3c3c44; font: 11px/14px "Open Sans", sans-serif; }
.nav { position: absolute; right: 1px; top: 158px; background: #484848; border: solid #5a5a5a; border-width: 1px 0; border-radius: 4px; }
.vscroll { width: 16px; padding-top: 6px; background: #f0f0f0; }
.vscroll svg { margin: 0 auto; }
.vscroll i { display: block; height: 17px; margin-top: 5px; background: #cdcdcd; }
.hscroll { height: 16px; padding: 3px 0 0 5px; background: #f0f0f0; }
.cmd { position: absolute; left: 312px; bottom: 0; width: 381px; height: 26px; display: flex; border-radius: 3px; background: rgba(205, 205, 205, .72); }
.cmdleft { display: flex; align-items: center; gap: 8px; width: 56px; padding: 0 0 2px 3px; }
.cgrip { width: 6px; height: 18px; background: conic-gradient(at 1px 2px, #666 25%, transparent 0) 0 0 / 3px 3px; }
.cmdleft button:last-child { margin-left: 2px; }
.cmdin { flex: 1; display: flex; align-items: center; gap: 7px; padding: 0 4px; border-radius: 2px; background: linear-gradient(rgba(200, 200, 200, .3) 8px, rgba(255, 255, 255, .8) 8px); }
.cmdin input { flex: 1; min-width: 0; font-size: 13px; font-style: italic; }

.foot { flex: none; height: 52px; margin-left: 1px; background: #d9d9d9; border-top: 1px solid #c4c4c4; border-bottom: 3px solid #f5f5f5; }
.layouts { display: flex; gap: 2px; padding-left: 12px; height: 17px; line-height: 19px; }
.layouts a { padding: 0 11px; color: #777; background: #e6e6e6; border-radius: 3px 3px 14px 14px; }
.layouts .on { background: #f5f5f5; color: #333; font-weight: 700; }
.layouts button { width: 22px; background: #e6e6e6; border-radius: 3px 3px 10px 10px; }
.status { display: flex; justify-content: flex-end; gap: 3px; height: 24px; margin: 5px 257px 0 0; }
.model { width: 28px; background: #f5f5f5; font-weight: 500; }
.grp { display: flex; gap: 2px; padding: 1px; background: #f5f5f5; }
.grp button { width: 22px; }
.grp .nr { width: 16px; }
.grp .act { background: #cce4ff; border: 1px solid #4a76a8; }

.promo { position: absolute; right: 0; bottom: 0; width: 255px; height: 97px; padding: 14px 0 0 13px; background: #fff; color: #fb7a18; font: 17px/22px "Noto Sans CJK SC", sans-serif; white-space: nowrap; }
.promo p { margin: 0; }
.dl { margin-left: 16px; }
.promo .mark { position: absolute; right: 15px; bottom: 8px; color: #8c8c8c; font-size: 19px; }
```

FILE: drawing.js
```js
const NS = 'http://www.w3.org/2000/svg';

function add(parent, tag, attrs) {
  const el = document.createElementNS(NS, tag);
  for (const k in attrs) el.setAttribute(k, attrs[k]);
  parent.appendChild(el);
}

// Floor boards: each row's joints are shifted against the row below.
const floor = document.getElementById('floor');
const row = 7.38, step = 88.67;
let boards = '', joints = '';
for (let i = 0; i < 37; i++) {
  const y = Math.round(607 - i * row) + 0.5;
  boards += `M372 ${y}H709`;
  const shift = (i * 36.94) % step;
  for (let x = 372 + shift - step; x < 710; x += step) {
    joints += `M${x.toFixed(1)} ${y + 7}l7 -7`;
  }
}
add(floor, 'path', { d: boards });
add(floor, 'path', { d: joints, 'stroke-width': 1.4 });

// Stippling on the bed cover: centre, spread and count of each cluster.
const dots = document.getElementById('dots');
const clusters = [[506, 392, 14, 20], [555, 388, 16, 26], [492, 405, 12, 12], [556, 420, 14, 18], [546, 446, 10, 14], [507, 452, 14, 20]];
let seed = 7;
const rnd = () => (seed = (seed * 16807) % 2147483647) / 2147483647;
for (const [cx, cy, r, n] of clusters) {
  for (let i = 0; i < n; i++) {
    const x = Math.max(482, Math.round(cx + (rnd() - 0.5) * 2 * r));
    const y = Math.max(382, Math.round(cy + (rnd() - 0.5) * 1.6 * r));
    add(dots, 'rect', { x, y, width: 1, height: 1 });
  }
}
```
